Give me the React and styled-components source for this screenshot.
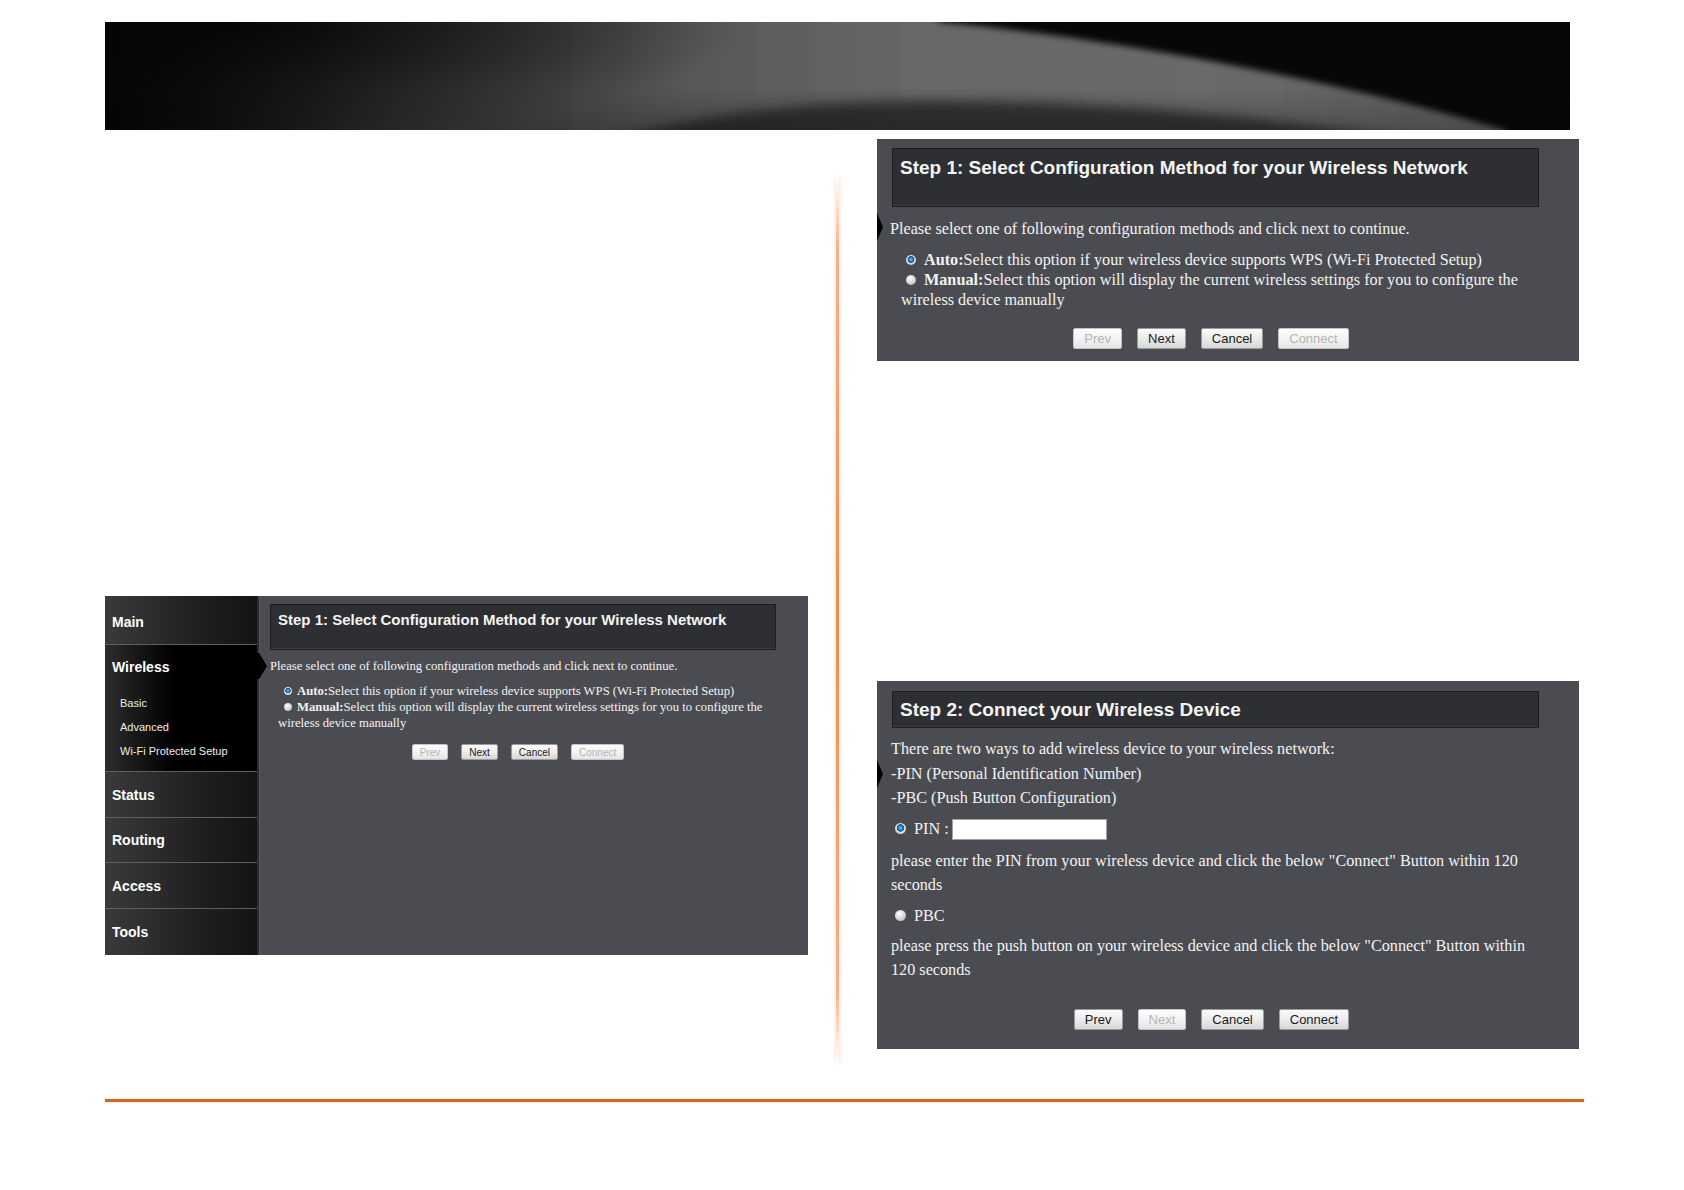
import React from "react";
import styled, { createGlobalStyle } from "styled-components";

const GlobalStyle = createGlobalStyle`
  html, body {
    margin: 0;
    padding: 0;
    background: #ffffff;
  }
  body {
    width: 1684px;
    height: 1190px;
    overflow: hidden;
    font-family: "Liberation Sans", Arial, sans-serif;
  }
`;

const Page = styled.div`
  width: 1684px;
  height: 1190px;
  display: flex;
  flex-direction: column;
`;

const Banner = styled.header`
  margin: 22px 0 0 105px;
  width: 1465px;
  height: 108px;
  background: #050505;
  overflow: hidden;
  svg {
    display: block;
  }
`;

const Main = styled.main`
  display: flex;
  padding-left: 105px;
  height: 969px;
`;

const LeftCol = styled.section`
  width: 703px;
  padding-top: 466px;
`;

const Divider = styled.div`
  width: 3px;
  height: 886px;
  margin: 47px 0 0 28px;
  border-radius: 2px;
  background: linear-gradient(
    to bottom,
    rgba(246, 170, 120, 0) 0%,
    #f6b088 8%,
    #ef8a4c 50%,
    #f6b088 92%,
    rgba(246, 170, 120, 0) 100%
  );
  box-shadow: 0 0 4px rgba(240, 150, 90, 0.4);
`;

const RightCol = styled.section`
  width: 702px;
  margin-left: 38px;
  padding-top: 9px;
  display: flex;
  flex-direction: column;
  gap: 320px;
`;

const FooterRule = styled.div`
  margin-left: 105px;
  width: 1479px;
  height: 3px;
  background: #c0702e;
  box-shadow: 0 0 2px 1px #fbefc8;
`;

/* ---------- router screenshot parts ---------- */

const Frame = styled.div`
  position: relative;
  display: flex;
  width: 703px;
  height: 359px;
  background: #4b4c52;
`;

const Sidebar = styled.nav`
  width: 152px;
  display: flex;
  flex-direction: column;
  border-right: 2px solid #2c2c2f;
  box-shadow: 1px 0 0 #5a5b60;
`;

const NavItem = styled.div`
  height: ${(p) => p.$h}px;
  flex-shrink: 0;
  display: flex;
  align-items: center;
  padding: ${(p) => p.$pt || 0}px 0 0 7px;
  box-sizing: border-box;
  background: linear-gradient(to right, #3a3a3c 0%, #1c1c1d 70%, #141414 100%);
  border-bottom: 1px solid #5e5e60;
  color: #ffffff;
  font-weight: bold;
  font-size: 14px;
  &:last-child {
    border-bottom: none;
  }
`;

const ActiveSection = styled.div`
  position: relative;
  height: 127px;
  box-sizing: border-box;
  padding: 10px 0 0 7px;
  background: linear-gradient(to right, #2c2c2c 0%, #000 45%);
  border-bottom: 1px solid #5e5e60;
  color: #fff;
`;

const ActiveLabel = styled.div`
  font-weight: bold;
  font-size: 14px;
  line-height: 24px;
`;

const SubList = styled.ul`
  list-style: none;
  margin: 12px 0 0;
  padding: 0 0 0 8px;
`;

const SubItem = styled.li`
  font-size: 11px;
  line-height: 24px;
  color: #ececec;
`;

const Pointer = styled.div`
  position: absolute;
  right: -10px;
  top: 8px;
  width: 12px;
  height: 26px;
  background: #000;
  clip-path: polygon(0 0, 35% 0, 100% 50%, 35% 100%, 0 100%);
`;

const Notch = styled.div`
  position: absolute;
  left: 0;
  top: ${(p) => p.$top}px;
  width: 6px;
  height: 28px;
  background: #000;
  clip-path: polygon(0 0, 100% 50%, 0 100%);
`;

const Content = styled.div`
  flex: 1;
  padding: 8px 32px 0 11px;
  font-family: "Liberation Serif", "Times New Roman", serif;
  color: #f2f2f2;
`;

const Shot = styled.div`
  position: relative;
  width: 702px;
  box-sizing: border-box;
  background: #4b4c52;
  padding: ${(p) => p.$pad};
  font-family: "Liberation Serif", "Times New Roman", serif;
  color: #f2f2f2;
`;

const TitleBox = styled.div`
  height: ${(p) => p.$h}px;
  box-sizing: border-box;
  margin-left: ${(p) => p.$ml || 0}px;
  padding: ${(p) => p.$pt}px 7px 0;
  background: #2e2f33;
  border: 1px solid #1c1d20;
  box-shadow: inset 0 -1px 0 #3c3d42;
  font-family: "Liberation Sans", Arial, sans-serif;
  font-weight: bold;
  font-size: ${(p) => p.$fs}px;
  line-height: ${(p) => p.$lh}px;
  color: #f4f4f4;
  white-space: nowrap;
`;

const Para = styled.p`
  margin: ${(p) => p.$mt || 0}px 0 0;
  font-size: ${(p) => p.$fs}px;
  line-height: ${(p) => p.$lh}px;
  white-space: nowrap;
`;

const Options = styled.div`
  margin-top: ${(p) => p.$mt}px;
  padding-left: ${(p) => p.$indent}px;
  font-size: ${(p) => p.$fs}px;
  line-height: ${(p) => p.$lh}px;
  white-space: nowrap;
`;

const Radio = styled.span`
  display: inline-block;
  vertical-align: middle;
  width: ${(p) => p.$size}px;
  height: ${(p) => p.$size}px;
  border-radius: 50%;
  margin: 0 ${(p) => p.$gap}px 2px ${(p) => p.$lead || 0}px;
  background: ${(p) =>
    p.$checked
      ? "radial-gradient(circle at 50% 45%, #7cc4f0 0%, #1d74b4 30%, #15548a 42%, #e6e6e6 50%, #c4c4c4 75%, #9a9a9a 100%)"
      : "radial-gradient(circle at 40% 35%, #ffffff 0%, #dcdcdc 45%, #b4b4b4 85%, #9c9c9c 100%)"};
`;

const Strong = styled.b`
  font-weight: bold;
`;

const ButtonRow = styled.div`
  display: flex;
  justify-content: center;
  gap: ${(p) => p.$gap}px;
  margin-top: ${(p) => p.$mt}px;
  padding-right: ${(p) => p.$pr || 0}px;
`;

const Btn = styled.button`
  height: ${(p) => p.$h}px;
  padding: 0 ${(p) => p.$px}px;
  font-family: "Liberation Sans", Arial, sans-serif;
  font-size: ${(p) => p.$fs}px;
  color: #1a1a1a;
  background: linear-gradient(to bottom, #fbfbfb 0%, #ececec 50%, #d6d6d6 100%);
  border: 1px solid #9c9c9c;
  border-radius: 2px;
  cursor: default;
  &:disabled {
    color: #b4b4b4;
    background: linear-gradient(to bottom, #fdfdfd 0%, #f1f1f1 60%, #e4e4e4 100%);
    border-color: #c4c4c4;
  }
`;

const PinRow = styled.div`
  display: flex;
  align-items: center;
  height: 26px;
  margin-top: ${(p) => p.$mt}px;
  padding-left: 4px;
  font-size: 16.2px;
`;

const PinInput = styled.input`
  width: 155px;
  height: 21px;
  box-sizing: border-box;
  margin-left: 3px;
  border: 1px solid #a0a0a0;
  background: #fff;
  padding: 0 3px;
`;

/* ---------- banner artwork ---------- */

const BannerArt = () => (
  <svg width="1465" height="108" viewBox="0 0 1465 108">
    <defs>
      <filter id="edge" filterUnits="userSpaceOnUse" x="-200" y="-200" width="1900" height="520">
        <feGaussianBlur stdDeviation="3" />
      </filter>
      <filter id="dome" filterUnits="userSpaceOnUse" x="-200" y="-200" width="1900" height="520">
        <feGaussianBlur stdDeviation="6" />
      </filter>
      <linearGradient id="bright" x1="0" y1="0" x2="1465" y2="0" gradientUnits="userSpaceOnUse">
        <stop offset="0" stopColor="#5a5a5a" />
        <stop offset="0.5" stopColor="#666" />
        <stop offset="0.75" stopColor="#6a6a6a" />
        <stop offset="1" stopColor="#5a5a5a" />
      </linearGradient>
      <linearGradient id="leftfade" x1="0" y1="0" x2="1" y2="0">
        <stop offset="0" stopColor="#050505" stopOpacity="1" />
        <stop offset="0.06" stopColor="#050505" stopOpacity="0.9" />
        <stop offset="0.2" stopColor="#050505" stopOpacity="0.5" />
        <stop offset="0.4" stopColor="#050505" stopOpacity="0.12" />
        <stop offset="0.55" stopColor="#050505" stopOpacity="0" />
      </linearGradient>
      <radialGradient id="corner" cx="0" cy="0" r="1" gradientUnits="userSpaceOnUse"
        gradientTransform="translate(120 0) scale(520 120)">
        <stop offset="0" stopColor="#050505" stopOpacity="0.9" />
        <stop offset="1" stopColor="#050505" stopOpacity="0" />
      </radialGradient>
      <linearGradient id="bottomfade" x1="0" y1="0" x2="0" y2="1">
        <stop offset="0.6" stopColor="#000" stopOpacity="0" />
        <stop offset="1" stopColor="#000" stopOpacity="0.2" />
      </linearGradient>
    </defs>
    <rect width="1465" height="108" fill="#070707" />
    <path
      d="M -40 140 L -40 -20 L 810 -20 L 835 0 C 990 14 1225 56 1400 108 L 1410 140 Z"
      fill="url(#bright)"
      filter="url(#edge)"
    />
    <path
      d="M 470 130 Q 600 82 800 79 Q 1080 76 1385 130 Z"
      fill="#333333"
      filter="url(#dome)"
    />
    <rect width="1465" height="108" fill="url(#leftfade)" />
    <rect width="1465" height="108" fill="url(#corner)" />
    <rect width="1465" height="108" fill="url(#bottomfade)" />
  </svg>
);

/* ---------- screens ---------- */

const SmallStepOne = () => (
  <Frame>
    <Sidebar>
      <NavItem $h={49} $pt={4}>Main</NavItem>
      <ActiveSection>
        <ActiveLabel>Wireless</ActiveLabel>
        <SubList>
          <SubItem>Basic</SubItem>
          <SubItem>Advanced</SubItem>
          <SubItem>Wi-Fi Protected Setup</SubItem>
        </SubList>
        <Pointer />
      </ActiveSection>
      <NavItem $h={46}>Status</NavItem>
      <NavItem $h={45}>Routing</NavItem>
      <NavItem $h={46}>Access</NavItem>
      <NavItem $h={46}>Tools</NavItem>
    </Sidebar>
    <Content>
      <TitleBox $h={46} $pt={7} $fs={15} $lh={16}>
        Step 1: Select Configuration Method for your Wireless Network
      </TitleBox>
      <Para $mt={9} $fs={12.7} $lh={15}>
        Please select one of following configuration methods and click next to continue.
      </Para>
      <Options $mt={9} $indent={8} $fs={12.7} $lh={16}>
        <Radio $checked $size={8} $gap={5} $lead={6} />
        <Strong>Auto:</Strong>Select this option if your wireless device supports WPS (Wi-Fi Protected Setup)
        <br />
        <Radio $size={8} $gap={5} $lead={6} />
        <Strong>Manual:</Strong>Select this option will display the current wireless settings for you to configure the
        <br />
        wireless device manually
      </Options>
      <ButtonRow $gap={13} $mt={13} $pr={10}>
        <Btn disabled $h={16} $px={7} $fs={10}>Prev</Btn>
        <Btn $h={16} $px={7} $fs={10}>Next</Btn>
        <Btn $h={16} $px={7} $fs={10}>Cancel</Btn>
        <Btn disabled $h={16} $px={7} $fs={10}>Connect</Btn>
      </ButtonRow>
    </Content>
  </Frame>
);

const LargeStepOne = () => (
  <Shot $pad="9px 40px 12px 13px">
    <Notch $top={74} />
    <TitleBox $h={59} $pt={8} $fs={19} $lh={22} $ml={2}>
      Step 1: Select Configuration Method for your Wireless Network
    </TitleBox>
    <Para $mt={12} $fs={16.2} $lh={20}>
      Please select one of following configuration methods and click next to continue.
    </Para>
    <Options $mt={11} $indent={11} $fs={16.2} $lh={20}>
      <Radio $checked $size={10} $gap={8} $lead={5} />
      <Strong>Auto:</Strong>Select this option if your wireless device supports WPS (Wi-Fi Protected Setup)
      <br />
      <Radio $size={10} $gap={8} $lead={5} />
      <Strong>Manual:</Strong>Select this option will display the current wireless settings for you to configure the
      <br />
      wireless device manually
    </Options>
    <ButtonRow $gap={15} $mt={18} $pr={7}>
      <Btn disabled $h={21} $px={10} $fs={13}>Prev</Btn>
      <Btn $h={21} $px={10} $fs={13}>Next</Btn>
      <Btn $h={21} $px={10} $fs={13}>Cancel</Btn>
      <Btn disabled $h={21} $px={10} $fs={13}>Connect</Btn>
    </ButtonRow>
  </Shot>
);

const LargeStepTwo = () => (
  <Shot $pad="10px 40px 19px 14px">
    <Notch $top={79} />
    <TitleBox $h={37} $pt={7} $fs={19} $lh={22} $ml={1}>
      Step 2: Connect your Wireless Device
    </TitleBox>
    <Para $mt={9} $fs={16.2} $lh={24.5}>
      There are two ways to add wireless device to your wireless network:
      <br />
      -PIN (Personal Identification Number)
      <br />
      -PBC (Push Button Configuration)
    </Para>
    <PinRow $mt={6}>
      <Radio $checked $size={11} $gap={8} />
      PIN :
      <PinInput type="text" />
    </PinRow>
    <Para $mt={6} $fs={16.2} $lh={24.5}>
      please enter the PIN from your wireless device and click the below "Connect" Button within 120
      <br />
      seconds
    </Para>
    <PinRow $mt={6}>
      <Radio $size={11} $gap={8} />
      PBC
    </PinRow>
    <Para $mt={4} $fs={16.2} $lh={24.5}>
      please press the push button on your wireless device and click the below "Connect" Button within
      <br />
      120 seconds
    </Para>
    <ButtonRow $gap={15} $mt={26} $pr={7}>
      <Btn $h={21} $px={10} $fs={13}>Prev</Btn>
      <Btn disabled $h={21} $px={10} $fs={13}>Next</Btn>
      <Btn $h={21} $px={10} $fs={13}>Cancel</Btn>
      <Btn $h={21} $px={10} $fs={13}>Connect</Btn>
    </ButtonRow>
  </Shot>
);

export default function App() {
  return (
    <>
      <GlobalStyle />
      <Page>
        <Banner>
          <BannerArt />
        </Banner>
        <Main>
          <LeftCol>
            <SmallStepOne />
          </LeftCol>
          <Divider />
          <RightCol>
            <LargeStepOne />
            <LargeStepTwo />
          </RightCol>
        </Main>
        <FooterRule />
      </Page>
    </>
  );
}
